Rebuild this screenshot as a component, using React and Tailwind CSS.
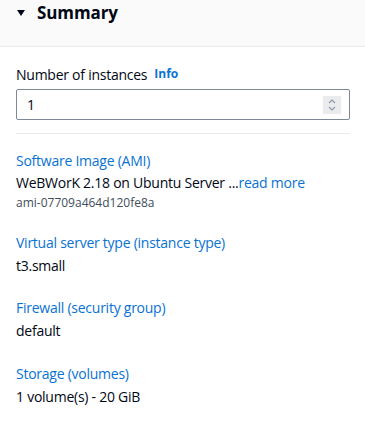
import React from 'react';

const font = { fontFamily: '"Open Sans", "Noto Sans", sans-serif' };

function Field({ label, className, children }) {
  return (
    <div className={className}>
      <p className="text-[14px] leading-[22px] text-[#0972d3]">{label}</p>
      {children}
    </div>
  );
}

export default function App() {
  return (
    <div className="w-[365px] h-[421px] bg-white text-[#000716] overflow-hidden" style={font}>
      {/* Header */}
      <div className="h-[47px] bg-[#fafafa] border-b border-[#e9ebed] px-4">
        <div className="flex items-center gap-[12px] h-[26px]">
          <svg width="8" height="6" viewBox="0 0 8 6" className="ml-[1px]">
            <path d="M0 0h8L4 6z" fill="#000716" />
          </svg>
          <h2 className="text-[17px] font-bold leading-[26px] tracking-[-0.1px]">Summary</h2>
        </div>
      </div>

      <div className="px-4 pt-[16px] tracking-[-0.25px]">
        {/* Number of instances */}
        <div className="flex items-center gap-[7px] h-[22px]">
          <span className="text-[14px]">Number of instances</span>
          <span className="text-[12px] font-bold text-[#0972d3] tracking-normal">Info</span>
        </div>
        <div className="mt-[4px] h-[31px] w-[334px] border border-[#7d8998] rounded-[2px] flex items-center justify-between pl-[10px] pr-[8px]">
          <span className="text-[14px]">1</span>
          <div className="w-[18px] h-[18px] bg-[#e9ebed] flex items-center justify-center">
            <svg width="10" height="14" viewBox="0 0 10 14" fill="none" stroke="#8d99a8" strokeWidth="1.1">
              <path d="M2 5l3-3 3 3" />
              <path d="M2 9l3 3 3-3" />
            </svg>
          </div>
        </div>
        <div className="mt-[13px] border-t border-[#e9ebed] w-[334px]" />

        <Field label="Software Image (AMI)" className="mt-[16px]">
          <p className="text-[14px] leading-[22px]">
            WeBWorK 2.18 on Ubuntu Server ...<span className="text-[#0972d3]">read more</span>
          </p>
          <p className="mt-[1px] text-[12px] leading-[16px] text-[#414d5c] tracking-normal">ami-07709a464d120fe8a</p>
        </Field>

        <Field label="Virtual server type (instance type)" className="mt-[21px]">
          <p className="text-[14px] leading-[24px]">t3.small</p>
        </Field>

        <Field label="Firewall (security group)" className="mt-[19px]">
          <p className="text-[14px] leading-[24px]">default</p>
        </Field>

        <Field label="Storage (volumes)" className="mt-[20px]">
          <p className="text-[14px] leading-[24px]">1 volume(s) - 20 GiB</p>
        </Field>
      </div>
    </div>
  );
}
